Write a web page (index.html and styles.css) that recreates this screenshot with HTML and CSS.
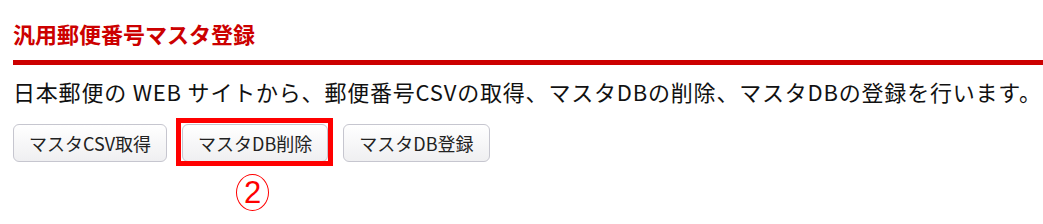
FILE: index.html
```html
<!DOCTYPE html>
<html lang="ja">
<head>
  <meta charset="UTF-8">
  <title>汎用郵便番号マスタ登録</title>
  <link rel="stylesheet" href="styles.css">
</head>
<body>
  <div class="panel">
    <h2 class="panel-title">汎用郵便番号マスタ登録</h2>
    <p class="panel-desc">日本郵便の WEB サイトから、郵便番号CSVの取得、マスタDBの削除、マスタDBの登録を行います。</p>
    <div class="actions">
      <button class="btn">マスタCSV取得</button>
      <div class="marked">
        <button class="btn">マスタDB削除</button>
        <span class="mark-box"></span>
        <span class="mark-num">2</span>
      </div>
      <button class="btn">マスタDB登録</button>
    </div>
  </div>
</body>
</html>
```

FILE: styles.css
```css
:root {
  --title-red: #cc0000;
  --mark-red: #ff0000;
  --text-color: #111;
  --btn-border: #c6c6cf;
}

html, body {
  min-height: 100vh;
}

body {
  margin: 0;
  font-family: "Noto Sans CJK JP", "Noto Sans", sans-serif;
  color: var(--text-color);
  background-color: white;
}

.panel {
  padding: 19px 0 0 13px;
}

.panel-title {
  margin: 0;
  padding-bottom: 13px;
  font-size: 22px;
  line-height: 28px;
  font-weight: bold;
  color: var(--title-red);
  border-bottom: 5px solid var(--title-red);
}

.panel-desc {
  margin: 10px 0 0;
  font-size: 22px;
  line-height: 32px;
  letter-spacing: 0.8px;
  white-space: nowrap;
}

.actions {
  display: flex;
  gap: 15px;
  margin-top: 17px;
  padding-bottom: 60px;
}

.btn {
  height: 38px;
  padding: 0 15px;
  font-family: inherit;
  font-size: 18px;
  color: #222;
  background: linear-gradient(#ffffff, #efeff1);
  border: 1px solid var(--btn-border);
  border-radius: 6px;
}

.marked {
  position: relative;
  display: flex;
}

.mark-box {
  position: absolute;
  top: -6px;
  left: -6px;
  right: -5px;
  bottom: -4px;
  border: 5px solid var(--mark-red);
}

/* circled number annotation under the highlighted button */
.mark-num {
  position: absolute;
  top: 50px;
  left: 54px;
  width: 31px;
  height: 35px;
  border: 1.5px solid var(--mark-red);
  border-radius: 50%;
  font-family: "Liberation Sans", sans-serif;
  font-size: 31px;
  line-height: 35px;
  text-align: center;
  color: var(--mark-red);
}
```
